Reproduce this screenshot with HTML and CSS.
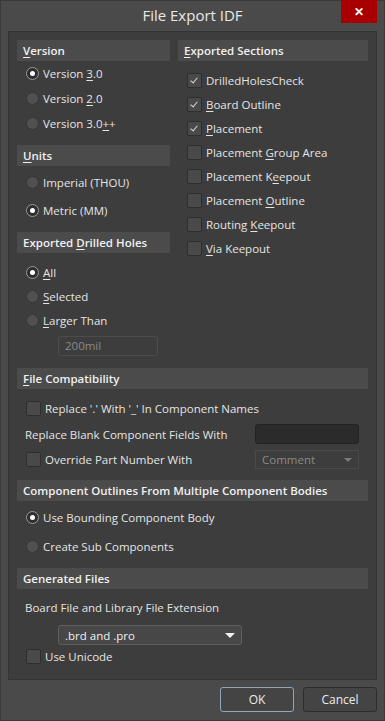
FILE: index.html
```html
<!DOCTYPE html>
<html>
<head>
    <meta charset="utf-8">
    <title>File Export IDF</title>
    <link rel="stylesheet" href="styles.css">
</head>
<body>
<div class="window">
    <div class="titlebar">
        <span class="title">File Export IDF</span>
        <span class="close">&#x2715;</span>
    </div>
    <div class="panel">
        <div class="columns">
            <div class="col-left">
                <div class="group g-version">
                    <h4><u>V</u>ersion</h4>
                    <div class="row r25 first"><span class="radio on"></span><span>Version <u>3</u>.0</span></div>
                    <div class="row r25"><span class="radio"></span><span>Version <u>2</u>.0</span></div>
                    <div class="row r25"><span class="radio"></span><span>Version 3.0<u>+</u>+</span></div>
                </div>
                <div class="group g-units">
                    <h4><u>U</u>nits</h4>
                    <div class="row r28 first"><span class="radio"></span><span>Imperial (THOU)</span></div>
                    <div class="row r28"><span class="radio on"></span><span>Metric (MM)</span></div>
                </div>
                <div class="group g-holes">
                    <h4>Exported <u>D</u>rilled Holes</h4>
                    <div class="row r24 first"><span class="radio on"></span><span><u>A</u>ll</span></div>
                    <div class="row r24"><span class="radio"></span><span><u>S</u>elected</span></div>
                    <div class="row r24"><span class="radio"></span><span><u>L</u>arger Than</span></div>
                    <div class="textbox disabled">200mil</div>
                </div>
            </div>
            <div class="col-right">
                <h4><u>E</u>xported Sections</h4>
                <div class="row r24 first"><span class="check on"></span><span>DrilledHolesCheck</span></div>
                <div class="row r24"><span class="check on"></span><span><u>B</u>oard Outline</span></div>
                <div class="row r24"><span class="check on"></span><span><u>P</u>lacement</span></div>
                <div class="row r24"><span class="check"></span><span>Placement <u>G</u>roup Area</span></div>
                <div class="row r24"><span class="check"></span><span>Placement K<u>e</u>epout</span></div>
                <div class="row r24"><span class="check"></span><span>Placement <u>O</u>utline</span></div>
                <div class="row r24"><span class="check"></span><span>Routing <u>K</u>eepout</span></div>
                <div class="row r24"><span class="check"></span><span><u>V</u>ia Keepout</span></div>
            </div>
        </div>

        <div class="section s-compat">
            <h4><u>F</u>ile Compatibility</h4>
            <div class="row r26 first"><span class="check"></span><span>Replace '.' With '_' In Component Names</span></div>
            <div class="row r26 split">
                <span class="plain">Replace Blank Component Fields With</span>
                <span class="textbox dark"></span>
            </div>
            <div class="row r25 split">
                <span class="label"><span class="check"></span><span>Override Part Number With</span></span>
                <span class="combo disabled">Comment<span class="arrow"></span></span>
            </div>
        </div>

        <div class="section s-outline">
            <h4>Component Outlines From Multiple Component Bodies</h4>
            <div class="row r28 first"><span class="radio on"></span><span>Use Bounding Component Body</span></div>
            <div class="row r28"><span class="radio"></span><span>Create Sub Components</span></div>
        </div>

        <div class="section s-files">
            <h4>Generated Files</h4>
            <div class="row r24 first"><span class="plain">Board File and Library File Extension</span></div>
            <div class="combo active">.brd and .pro<span class="arrow"></span></div>
            <div class="row r20 last"><span class="check"></span><span>Use Unicode</span></div>
        </div>
    </div>
    <div class="buttons">
        <span class="button default">OK</span>
        <span class="button">Cancel</span>
    </div>
</div>
</body>
</html>
```

FILE: styles.css
```css
html, body
{
	margin: 0;
	padding: 0;
	background-color: #4a4a4a;
}

body
{
	font-family: "Open Sans", "Noto Sans", sans-serif;
	font-size: 11.5px;
	color: #e4e4e4;
}

u
{
	text-decoration: underline;
	text-underline-offset: 2px;
}

div.window
{
	width: 385px;
	height: 721px;
	background-color: #4a4a4a;
	box-sizing: border-box;
	border: 1px solid #3a3a3a;
}

div.titlebar
{
	height: 30px;
	display: flex;
	justify-content: center;
	align-items: center;
	position: relative;
}

span.title
{
	font-size: 15px;
	color: #e8e8e8;
	margin-top: -2px;
}

span.close
{
	position: absolute;
	right: 7px;
	top: -1px;
	width: 36px;
	height: 23px;
	background-color: #a80000;
	color: #ffffff;
	font-size: 12px;
	font-weight: bold;
	display: flex;
	justify-content: center;
	align-items: center;
}

div.panel
{
	margin: 0 7px 0 7px;
	height: 649px;
	box-sizing: border-box;
	background-color: #3d3d3d;
	border: 1px solid #333333;
	padding: 8px 8px 0 8px;
}

h4
{
	margin: 0;
	height: 21px;
	line-height: 21px;
	padding-left: 6px;
	background-color: #4b4b4b;
	color: #f0f0f0;
	font-size: 11.5px;
	font-weight: 600;
}

div.columns
{
	display: grid;
	grid-template-columns: 153px 190px;
	column-gap: 8px;
}

div.row
{
	display: flex;
	align-items: center;
	padding-left: 9px;
	white-space: nowrap;
}

div.r20 { height: 20px; }
div.r24 { height: 24px; }
div.r25 { height: 25px; }
div.r26 { height: 26px; }
div.r28 { height: 28px; }

div.g-version div.first { margin-top: 0; }
div.g-units { margin-top: 9px; }
div.g-units div.first { margin-top: 2px; }
div.g-holes { margin-top: 8px; }
div.g-holes div.first { margin-top: 7px; }
div.col-right div.first { margin-top: 7px; }

span.radio
{
	width: 11px;
	height: 11px;
	border-radius: 50%;
	background-color: #505050;
	border: 1px solid #363636;
	margin-right: 4px;
	flex: none;
	position: relative;
}

span.radio.on
{
	background-color: #2e2e2e;
	border-color: #9a9a9a;
}

span.radio.on::after
{
	content: "";
	position: absolute;
	left: 3px;
	top: 3px;
	width: 5px;
	height: 5px;
	border-radius: 50%;
	background-color: #ffffff;
}

span.check
{
	width: 13px;
	height: 13px;
	border-radius: 2px;
	background-color: #494949;
	border: 1px solid #2e2e2e;
	margin-right: 4px;
	flex: none;
	position: relative;
}

span.check.on::after
{
	content: "";
	position: absolute;
	left: 4px;
	top: 2px;
	width: 3px;
	height: 6px;
	border-right: 1px solid #d8d8d8;
	border-bottom: 1px solid #d8d8d8;
	transform: rotate(40deg);
}

.textbox
{
	display: block;
	box-sizing: border-box;
	height: 20px;
	line-height: 18px;
	padding-left: 6px;
	border: 1px solid #4c4c4c;
	border-radius: 2px;
}

div.g-holes div.textbox
{
	width: 100px;
	margin: 4px 0 0 41px;
}

.disabled
{
	color: #8a8a8a;
}

div.s-compat { margin-top: 12px; }
div.s-compat div.first { margin-top: 6px; }
div.s-outline { margin-top: 8px; }
div.s-outline div.first { margin-top: 2px; }
div.s-outline div.r28 + div.r28 { margin-top: 1px; }
div.s-files { margin-top: 8px; }
div.s-files div.first { margin-top: 6px; }

div.split
{
	justify-content: space-between;
	padding-right: 9px;
}

span.plain
{
	margin-left: -1px;
}

span.label
{
	display: flex;
	align-items: center;
}

span.textbox.dark
{
	width: 104px;
	height: 20px;
	background-color: #2b2b2b;
	border: 1px solid #222222;
	border-radius: 3px;
}

.combo
{
	display: flex;
	align-items: center;
	justify-content: space-between;
	box-sizing: border-box;
	height: 19px;
	padding: 0 6px;
	border: 1px solid #4a4a4a;
}

span.combo
{
	width: 104px;
}

span.arrow
{
	width: 0;
	height: 0;
	border-left: 4px solid transparent;
	border-right: 4px solid transparent;
	border-top: 4px solid #7a7a7a;
}

div.combo.active
{
	width: 184px;
	height: 20px;
	margin: 6px 0 0 41px;
	background-color: #474747;
	border: 1px solid #5e5e5e;
	border-radius: 3px;
	color: #f0f0f0;
}

div.combo.active span.arrow
{
	border-left-width: 5px;
	border-right-width: 5px;
	border-top: 5px solid #f0f0f0;
}

div.s-files div.last { margin-top: 1px; }

div.buttons
{
	display: flex;
	justify-content: flex-end;
	gap: 9px;
	padding: 7px 7px 0 0;
}

span.button
{
	width: 74px;
	height: 25px;
	box-sizing: border-box;
	display: flex;
	justify-content: center;
	align-items: center;
	background-color: #444444;
	border: 1px solid #2c2c2c;
	border-radius: 3px;
	font-size: 12px;
	color: #ececec;
}

span.button.default
{
	border-color: #8fa7bd;
}
```
